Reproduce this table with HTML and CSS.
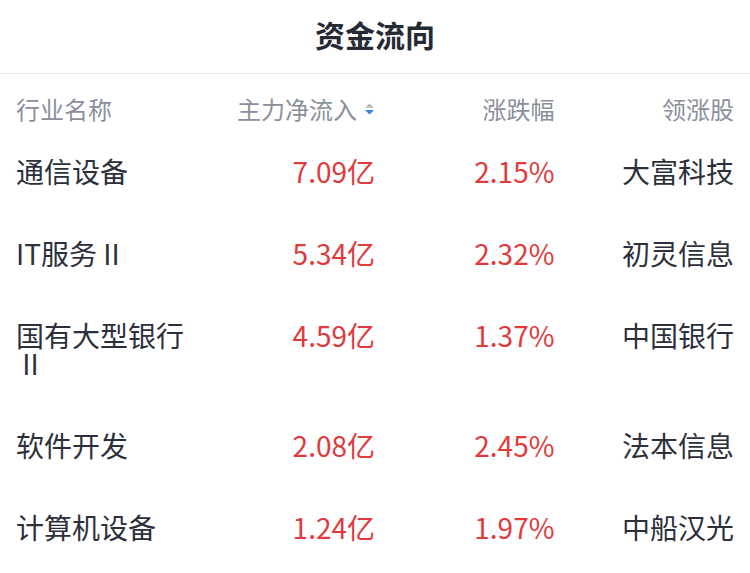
FILE: index.html
```html
<!DOCTYPE html>
<html lang="zh-CN">
<head>
<meta charset="utf-8">
<title>资金流向</title>
<link rel="stylesheet" href="styles.css">
</head>
<body>
<div class="page">
  <div class="title">资金流向</div>
  <div class="grid head">
    <div class="c1">行业名称</div>
    <div class="c r sortable">主力净流入<svg class="sort" width="11" height="12" viewBox="0 0 11 12"><path d="M5.5 0.5 L10 4.8 L1 4.8 Z" fill="#b3b8c2"/><path d="M1 7 L10 7 L5.5 11.5 Z" fill="#3b7fe6"/></svg></div>
    <div class="c r">涨跌幅</div>
    <div class="c r">领涨股</div>
  </div>
  <div class="grid row">
    <div class="c1">通信设备</div>
    <div class="c r red">7.09亿</div>
    <div class="c r red">2.15%</div>
    <div class="c r">大富科技</div>
  </div>
  <div class="grid row">
    <div class="c1">IT服务 II</div>
    <div class="c r red">5.34亿</div>
    <div class="c r red">2.32%</div>
    <div class="c r">初灵信息</div>
  </div>
  <div class="grid row">
    <div class="c1">国有大型银行&#8203;&nbsp;II</div>
    <div class="c r red">4.59亿</div>
    <div class="c r red">1.37%</div>
    <div class="c r">中国银行</div>
  </div>
  <div class="grid row">
    <div class="c1">软件开发</div>
    <div class="c r red">2.08亿</div>
    <div class="c r red">2.45%</div>
    <div class="c r">法本信息</div>
  </div>
  <div class="grid row">
    <div class="c1">计算机设备</div>
    <div class="c r red">1.24亿</div>
    <div class="c r red">1.97%</div>
    <div class="c r">中船汉光</div>
  </div>
</div>
</body>
</html>
```
FILE: styles.css
```css
html, body {
  margin: 0;
  padding: 0;
  background: #ffffff;
}
body {
  font-family: "Noto Sans CJK SC", "Noto Sans", sans-serif;
  color: #2c303b;
  width: 750px;
  height: 573px;
  overflow: hidden;
}
.page {
  width: 750px;
}
.title {
  height: 68px;
  line-height: 68px;
  padding-bottom: 5px;
  text-align: center;
  font-size: 30px;
  font-weight: 700;
  color: #262a35;
  border-bottom: 1px solid #e7e7e9;
}
.grid {
  display: grid;
  grid-template-columns: repeat(4, 1fr);
  padding: 0 16px;
}
.head {
  font-size: 24px;
  line-height: 24px;
  color: #8a8f9b;
  padding-top: 23px;
  padding-bottom: 9px;
}
.row {
  font-size: 28px;
  line-height: 28px;
  padding-top: 27px;
  padding-bottom: 27px;
  align-items: start;
}
.c1 {
  text-align: left;
  padding-right: 8px;
}
.r {
  text-align: right;
}
.sortable {
  display: flex;
  justify-content: flex-end;
  align-items: center;
  gap: 7px;
}
.sort {
  display: block;
  flex: none;
}
.red {
  color: #e03a3c;
}
```
